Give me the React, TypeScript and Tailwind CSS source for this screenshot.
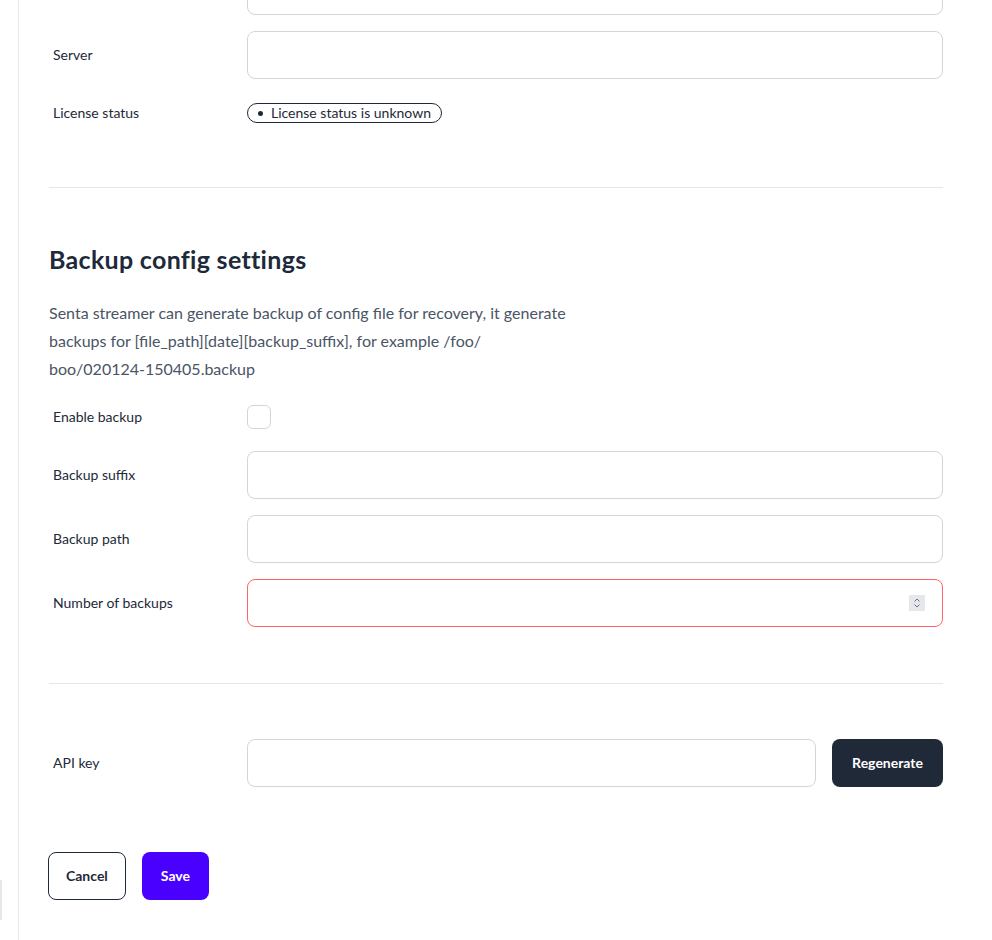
import type { ReactNode } from 'react'

const font = { fontFamily: 'Lato, "Noto Sans", sans-serif' }

function Row({ label, children }: { label: string; children: ReactNode }) {
  return (
    <div className="flex items-center">
      <div className="w-[198px] shrink-0 pl-1 text-sm text-gray-800">{label}</div>
      <div className="flex min-w-0 flex-1 items-center">{children}</div>
    </div>
  )
}

function TextInput({ invalid }: { invalid?: boolean }) {
  return (
    <input
      type="text"
      className={
        invalid
          ? 'h-12 w-full rounded-lg border border-red-400 bg-white px-4 text-sm outline-none'
          : 'h-12 w-full rounded-lg border border-gray-300 bg-white px-4 text-sm outline-none'
      }
    />
  )
}

function NumberInput() {
  return (
    <div className="relative w-full">
      <input
        type="text"
        className="h-12 w-full rounded-lg border border-red-400 bg-white px-4 text-sm outline-none"
      />
      {/* spinner, like the native number control */}
      <div className="absolute right-[18px] top-4 flex h-4 w-4 items-center justify-center bg-gray-200">
        <svg width="10" height="12" viewBox="0 0 10 12" fill="none" stroke="#6b7280" strokeWidth="1">
          <path d="M2.5 4.5 5 2l2.5 2.5" />
          <path d="M2.5 7.5 5 10l2.5-2.5" />
        </svg>
      </div>
    </div>
  )
}

export default function App() {
  return (
    <div className="flex h-[940px] overflow-hidden bg-white" style={font}>
      {/* sidebar edge */}
      <div className="flex w-[19px] shrink-0 flex-col border-r border-gray-200">
        <div className="h-[880px]" />
        <div className="h-10 w-[2px] bg-gray-200" />
      </div>

      <main className="flex-1 pl-[30px] pr-[49px]">
        {/* license section */}
        <section className="-mt-[33px] flex flex-col gap-4 border-b border-gray-200 pb-14">
          <Row label="">
            <TextInput />
          </Row>
          <Row label="Server">
            <TextInput />
          </Row>
          <div className="flex h-9 items-center">
            <div className="w-[198px] shrink-0 pl-1 text-sm text-gray-800">License status</div>
            <span className="inline-flex h-5 items-center gap-2 rounded-full border border-gray-800 px-2.5 text-sm leading-none text-gray-800">
              <span className="h-[5px] w-[5px] rounded-full bg-gray-800" />
              License status is unknown
            </span>
          </div>
        </section>

        {/* backup section */}
        <section className="border-b border-gray-200 pb-14 pt-[55px]">
          <h2 className="text-[25px] font-bold leading-8 tracking-[0.3px] text-gray-800">Backup config settings</h2>
          <p className="mt-6 max-w-[540px] text-base leading-7 text-gray-600">
            Senta streamer can generate backup of config file for recovery, it generate backups for
            [file_path][date][backup_suffix], for example /foo/<wbr />
            <span className="whitespace-nowrap">boo/020124-150405.backup</span>
          </p>
          <div className="mt-4 flex flex-col gap-4">
            <div className="flex h-9 items-center">
              <div className="w-[198px] shrink-0 pl-1 text-sm text-gray-800">Enable backup</div>
              <input type="checkbox" className="h-6 w-6 appearance-none rounded-md border border-gray-300 bg-white" />
            </div>
            <Row label="Backup suffix">
              <TextInput />
            </Row>
            <Row label="Backup path">
              <TextInput />
            </Row>
            <Row label="Number of backups">
              <NumberInput />
            </Row>
          </div>
        </section>

        {/* api key */}
        <section className="pt-[55px]">
          <Row label="API key">
            <div className="flex w-full gap-4">
              <TextInput />
              <button className="h-12 shrink-0 rounded-lg bg-[#1f2937] px-5 text-sm font-bold text-white">
                Regenerate
              </button>
            </div>
          </Row>
        </section>

        <div className="-ml-px mt-[65px] flex gap-4">
          <button className="h-12 rounded-lg border border-gray-800 bg-white px-[17px] text-sm font-bold text-gray-800">
            Cancel
          </button>
          <button className="h-12 rounded-lg bg-[#4a00ff] px-[19px] text-sm font-bold text-white">Save</button>
        </div>
      </main>
    </div>
  )
}
